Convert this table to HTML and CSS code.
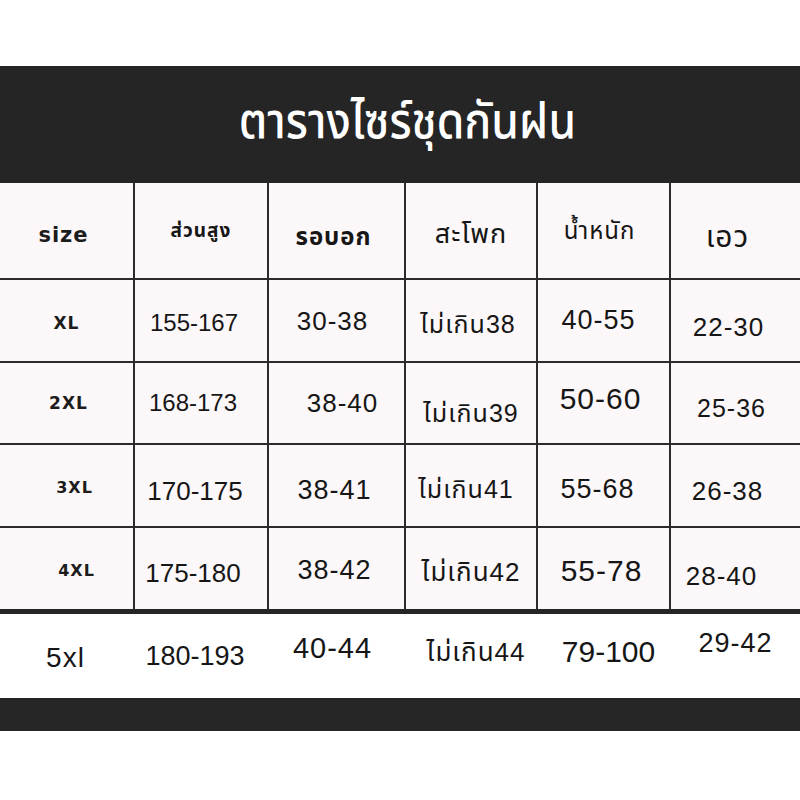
FILE: index.html
```html
<!DOCTYPE html>
<html lang="th">
<head>
<meta charset="utf-8">
<title>ตารางไซร์ชุดกันฝน</title>
<link rel="stylesheet" href="styles.css">
</head>
<body>
<div class="page">
  <div class="top-space"></div>
  <header class="banner">
    <h1 class="title">ตารางไซร์ชุดกันฝน</h1>
  </header>

  <div class="grid">
    <div class="cell hd d5 l3"><span class="lab t21">size</span></div>
    <div class="cell hd"><span class="th-b t19">ส่วนสูง</span></div>
    <div class="cell hd d6 l3"><span class="th-b t24">รอบอก</span></div>
    <div class="cell hd d4"><span class="t27">สะโพก</span></div>
    <div class="cell hd l4"><span class="t24">น้ำหนัก</span></div>
    <div class="cell hd last d6 l8"><span class="t30">เอว</span></div>

    <div class="cell d3"><span class="lab t17">XL</span></div>
    <div class="cell d2 l7"><span class="t24 ls0">155-167</span></div>
    <div class="cell l4"><span class="t26">30-38</span></div>
    <div class="cell d4 l3"><span class="t25">ไม่เกิน38</span></div>
    <div class="cell l5"><span class="t27">40-55</span></div>
    <div class="cell last d6 l7"><span class="t26">22-30</span></div>

    <div class="cell r2"><span class="lab t17">2XL</span></div>
    <div class="cell l8"><span class="t24 ls0">168-173</span></div>
    <div class="cell r6"><span class="t26">38-40</span></div>
    <div class="cell d10"><span class="t25">ไม่เกิน39</span></div>
    <div class="cell u4 l3"><span class="t30">50-60</span></div>
    <div class="cell last d5 l4"><span class="t25">25-36</span></div>

    <div class="cell d2 r8"><span class="lab t16">3XL</span></div>
    <div class="cell d5 l6"><span class="t26 ls0">170-175</span></div>
    <div class="cell d5 l2"><span class="t27">38-41</span></div>
    <div class="cell d4 l5"><span class="t25">ไม่เกิน41</span></div>
    <div class="cell d4 l6"><span class="t27">55-68</span></div>
    <div class="cell last d5 l8"><span class="t26">26-38</span></div>

    <div class="cell nb d2 r10"><span class="lab t16">4XL</span></div>
    <div class="cell nb d4 l8"><span class="t26 ls0">175-180</span></div>
    <div class="cell nb d2 l2"><span class="t27">38-42</span></div>
    <div class="cell nb d3"><span class="t26">ไม่เกิน42</span></div>
    <div class="cell nb d2 l2"><span class="t30">55-78</span></div>
    <div class="cell nb last d7 l14"><span class="t26">28-40</span></div>
  </div>

  <div class="rule"></div>

  <div class="extra">
    <div class="xcell d2 l2"><span class="t28">5xl</span></div>
    <div class="xcell l7"><span class="t27 ls0">180-193</span></div>
    <div class="xcell u8 l5"><span class="t29">40-44</span></div>
    <div class="xcell u4 r4"><span class="t26">ไม่เกิน44</span></div>
    <div class="xcell u4 r4"><span class="t30 ls0">79-100</span></div>
    <div class="xcell u13"><span class="t27">29-42</span></div>
  </div>

  <div class="footer-band"></div>
</div>
</body>
</html>
```

FILE: styles.css
```css
* {
  box-sizing: border-box;
}

html, body {
  margin: 0;
  padding: 0;
  background: #ffffff;
}

body {
  font-family: "Liberation Sans", "Noto Sans Thai", "Noto Sans Thai UI", "Loma", "Garuda", "Noto Sans", sans-serif;
  color: #161616;
}

.page {
  width: 800px;
  height: 800px;
  display: flex;
  flex-direction: column;
  background: #ffffff;
}

.top-space {
  height: 66px;
}

.banner {
  height: 117px;
  background: #252525;
  display: flex;
  align-items: center;
  justify-content: center;
  padding-left: 16px;
  padding-bottom: 8px;
}

.title {
  margin: 0;
  color: #ffffff;
  font-size: 50px;
  font-weight: 500;
  line-height: 1;
  letter-spacing: 0;
  transform: scaleX(0.89);
}

.grid {
  display: grid;
  grid-template-columns: 135px 134px 137px 132px 133px 129px;
  grid-template-rows: 97px 83px 82px 83px 81px;
  background: #fcf8f9;
}

.cell {
  display: flex;
  align-items: center;
  justify-content: center;
  border-right: 2px solid #2b2b2b;
  border-bottom: 2px solid #2b2b2b;
  line-height: 1;
  white-space: nowrap;
}

.cell.last {
  border-right: none;
}

.cell.nb {
  border-bottom: none;
}

.rule {
  height: 5px;
  background: #262626;
}

.extra {
  height: 84px;
  display: grid;
  grid-template-columns: 135px 134px 137px 132px 133px 129px;
  background: #ffffff;
}

.xcell {
  display: flex;
  align-items: center;
  justify-content: center;
  line-height: 1;
  white-space: nowrap;
}

.footer-band {
  height: 33px;
  background: #262626;
}

/* text styles */
.lab {
  font-family: "DejaVu Sans", "Liberation Sans", sans-serif;
  font-weight: 700;
  letter-spacing: 1px;
  color: #1c1c1c;
}

.th-b {
  font-weight: 700;
}

span {
  letter-spacing: 1px;
}

.ls0 {
  letter-spacing: 0;
}

.t16 { font-size: 16px; }
.t17 { font-size: 17px; }
.t19 { font-size: 19px; }
.t21 { font-size: 21px; }
.t24 { font-size: 24px; }
.t25 { font-size: 25px; }
.t26 { font-size: 26px; }
.t27 { font-size: 27px; }
.t28 { font-size: 28px; }
.t29 { font-size: 29px; }
.t30 { font-size: 30px; }

/* small nudges of the text inside its cell */
.l2 { padding-right: 4px; }
.l3 { padding-right: 6px; }
.l4 { padding-right: 8px; }
.l5 { padding-right: 10px; }
.l6 { padding-right: 12px; }
.l7 { padding-right: 14px; }
.l8 { padding-right: 16px; }
.l14 { padding-right: 28px; }
.r2 { padding-left: 4px; }
.r4 { padding-left: 8px; }
.r6 { padding-left: 12px; }
.r8 { padding-left: 16px; }
.r10 { padding-left: 20px; }
.d2 { padding-top: 4px; }
.d3 { padding-top: 6px; }
.d4 { padding-top: 8px; }
.d5 { padding-top: 10px; }
.d6 { padding-top: 12px; }
.d7 { padding-top: 14px; }
.d10 { padding-top: 20px; }
.u4 { padding-bottom: 8px; }
.u8 { padding-bottom: 16px; }
.u13 { padding-bottom: 26px; }
```
